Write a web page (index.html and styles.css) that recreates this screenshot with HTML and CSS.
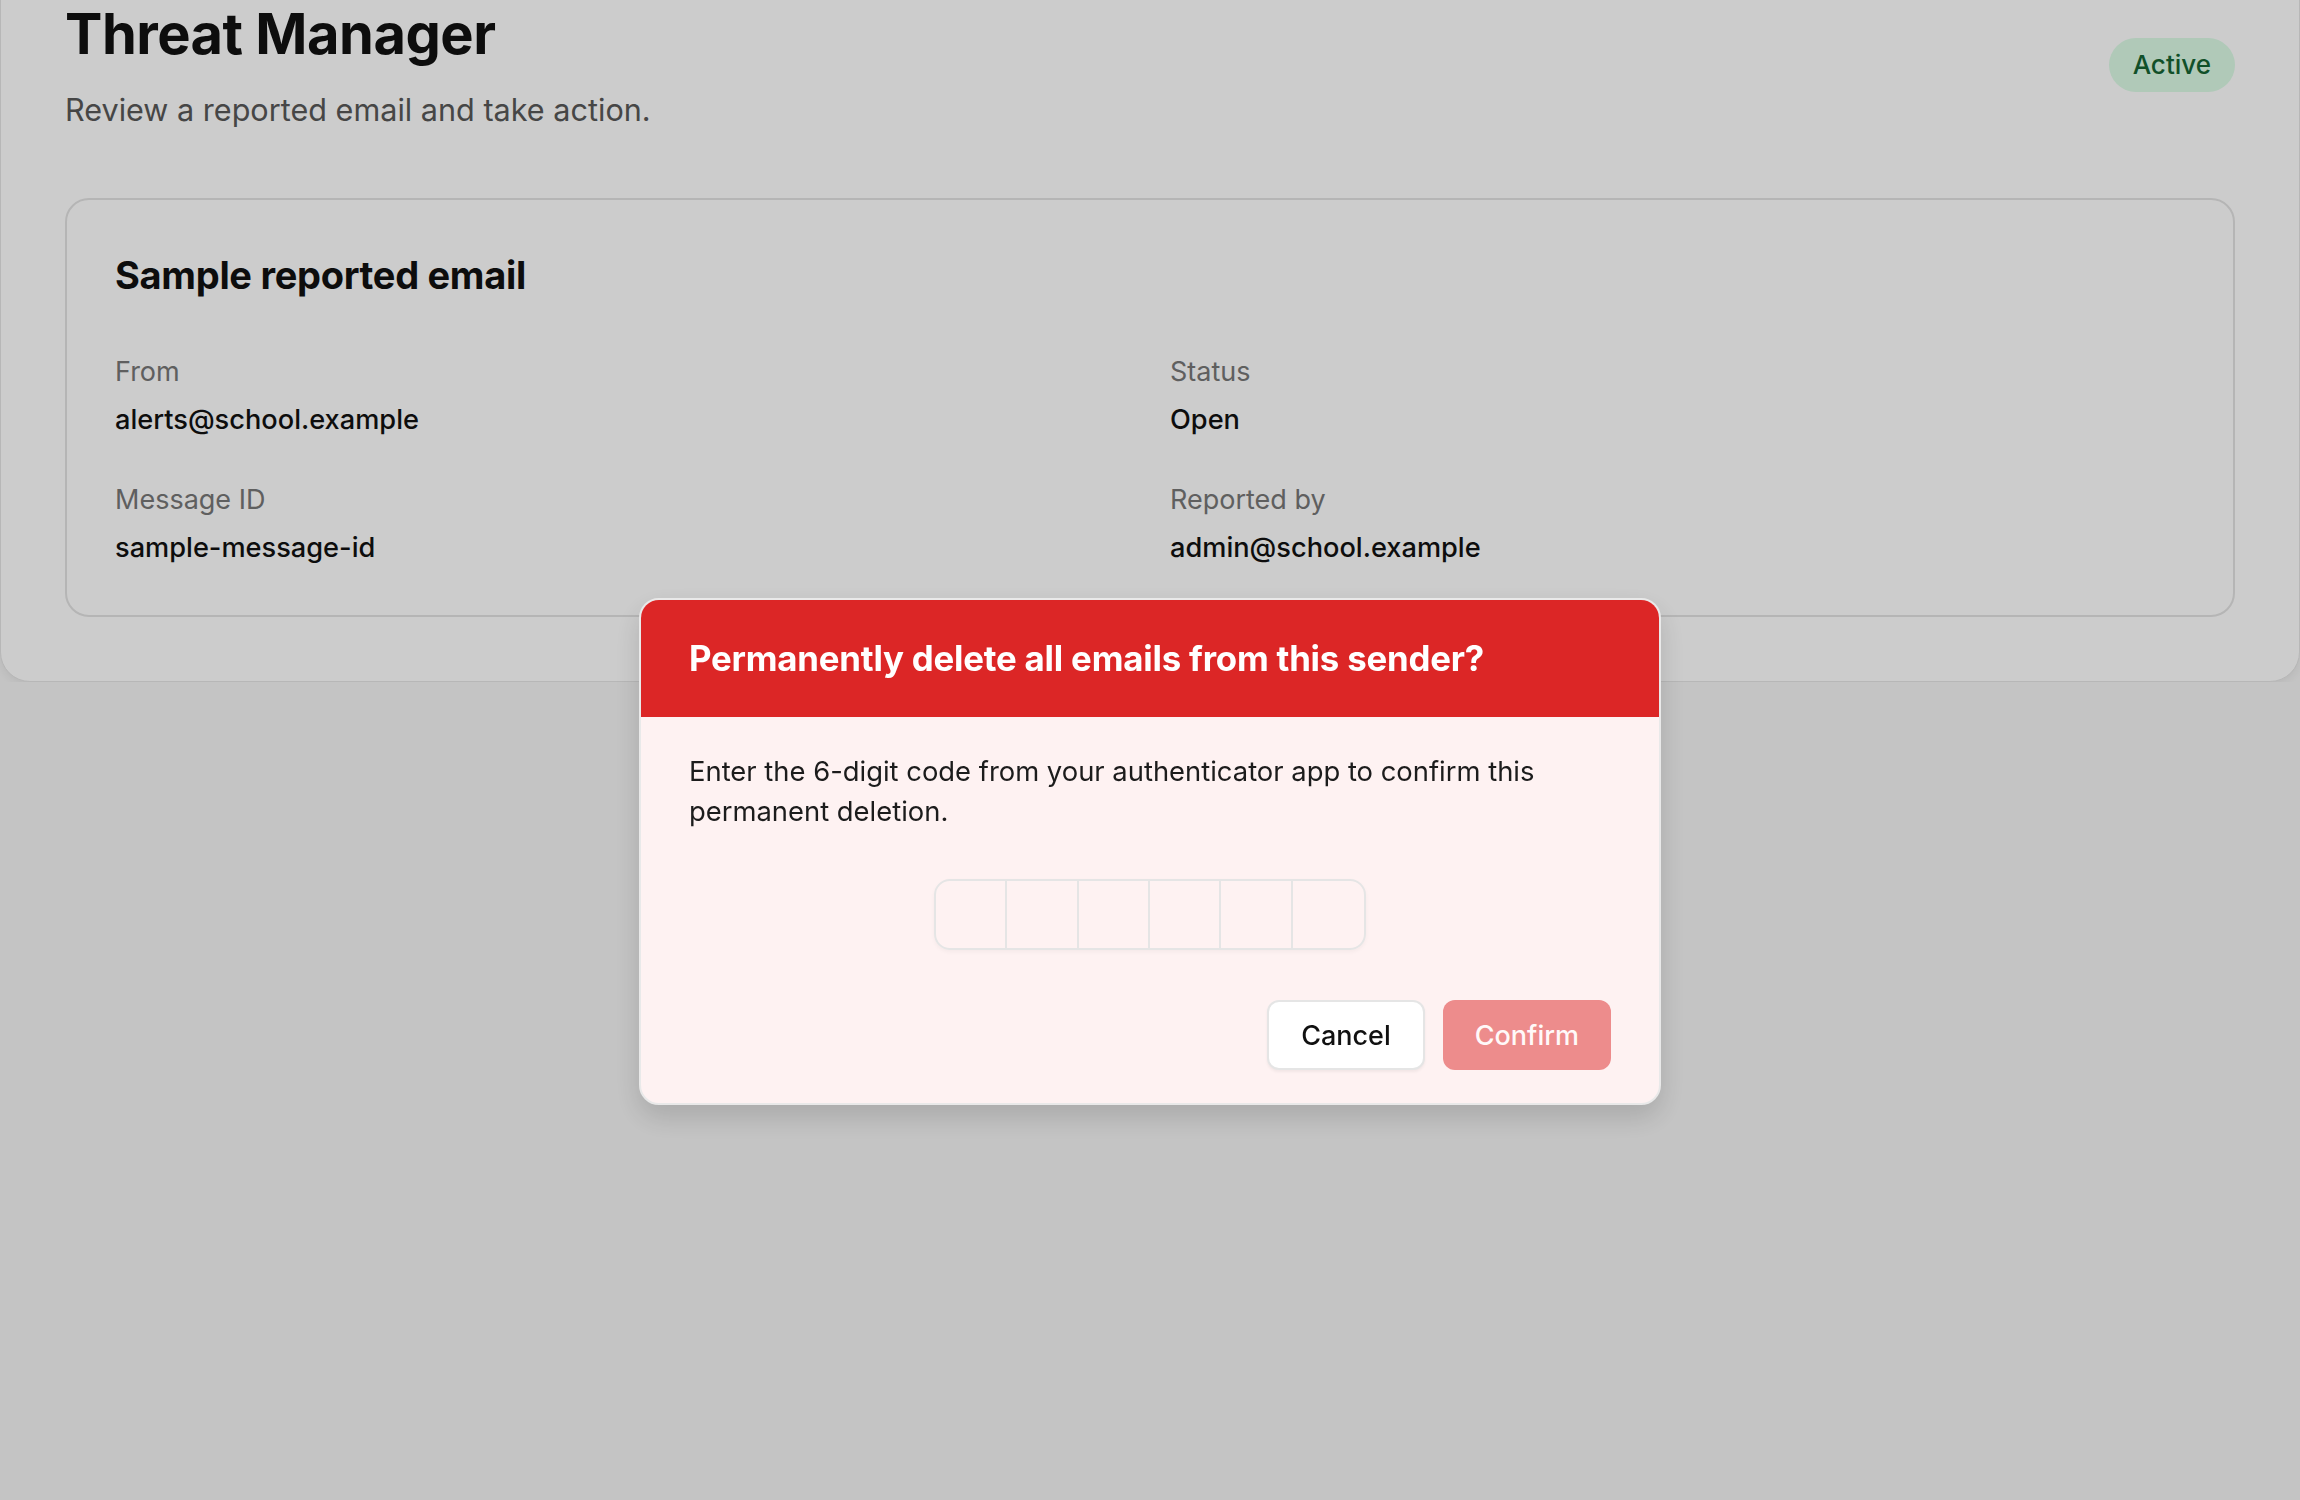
FILE: index.html
```html
<!DOCTYPE html>
<html lang="en">
  <head>
    <meta charset="UTF-8" />
    <meta name="viewport" content="width=device-width, initial-scale=1.0" />
    <title>Threat Manager</title>
    <link rel="stylesheet" href="styles.css">
  </head>
  <body>
    <main class="shell">
      <header class="top">
        <div>
          <h1>Threat Manager</h1>
          <p class="undertekst">Review a reported email and take action.</p>
        </div>
        <span class="badge">Active</span>
      </header>

      <section class="mailkort">
        <h2>Sample reported email</h2>
        <div class="felter">
          <div class="felt">
            <p class="label">From</p>
            <p class="vaerdi">alerts@school.example</p>
          </div>
          <div class="felt">
            <p class="label">Status</p>
            <p class="vaerdi">Open</p>
          </div>
          <div class="felt">
            <p class="label">Message ID</p>
            <p class="vaerdi">sample-message-id</p>
          </div>
          <div class="felt">
            <p class="label">Reported by</p>
            <p class="vaerdi">admin@school.example</p>
          </div>
        </div>
      </section>
    </main>

    <!-- bekraeft sletning -->
    <div id="popup">
      <div class="dialog">
        <div class="dialogTop">
          <h3>Permanently delete all emails from this sender?</h3>
        </div>
        <div class="dialogKrop">
          <p>Enter the 6-digit code from your authenticator app to confirm this permanent deletion.</p>
          <div class="kode">
            <input type="text" maxlength="1" />
            <input type="text" maxlength="1" />
            <input type="text" maxlength="1" />
            <input type="text" maxlength="1" />
            <input type="text" maxlength="1" />
            <input type="text" maxlength="1" />
          </div>
          <div class="knapper">
            <button class="annuller">Cancel</button>
            <button class="bekraeft" disabled>Confirm</button>
          </div>
        </div>
      </div>
    </div>
  </body>
</html>
```

FILE: styles.css
```css
/* ---------FORSIDE------------*/
* {
  margin: 0;
  padding: 0;
  box-sizing: border-box;
}

body {
  background-color: #f5f5f5;
  font-family: "Inter", "Noto Sans", sans-serif;
  color: #111111;
}

.shell {
  margin-top: -64px;
  padding: 64px;
  background-color: white;
  border: 1px solid #e5e5e5;
  border-radius: 30px;
  box-shadow: 0 3px 8px rgba(0, 0, 0, 0.06);
}

.top {
  display: flex;
  justify-content: space-between;
  align-items: flex-start;
  margin-bottom: 69px;
}

h1 {
  font-size: 56px;
  font-weight: 700;
  line-height: 67px;
  letter-spacing: -0.5px;
}

.undertekst {
  margin-top: 22px;
  font-size: 30.6px;
  line-height: 39px;
  color: #585858;
}

.badge {
  margin-top: 37px;
  padding: 10px 24px;
  border-radius: 999px;
  background-color: #dcfce7;
  color: #166534;
  font-size: 26px;
  line-height: 34px;
  font-weight: 500;
}

.mailkort {
  border: 2px solid #e3e3e3;
  border-radius: 24px;
  padding: 52px 48px 49px;
}

.mailkort h2 {
  font-size: 38px;
  font-weight: 700;
  line-height: 46px;
  letter-spacing: -0.3px;
}

.felter {
  margin-top: 56px;
  display: grid;
  grid-template-columns: 1fr 1fr;
  column-gap: 40px;
  row-gap: 44px;
}

.label {
  font-size: 27px;
  line-height: 36px;
  color: #777777;
}

.vaerdi {
  margin-top: 12px;
  font-size: 27.2px;
  line-height: 36px;
  font-weight: 500;
}

/* ---------POP UP------------*/

#popup {
  position: fixed;
  top: 0;
  left: 0;
  width: 100%;
  height: 100%;
  background-color: rgba(0, 0, 0, 0.2);
  display: flex;
  justify-content: center;
  align-items: flex-start;
  padding-top: 598px;
}

.dialog {
  width: 1022px;
  border: 2px solid #e9e9e9;
  border-radius: 20px;
  overflow: hidden;
  background-color: #fef2f2;
  box-shadow: 0 12px 28px rgba(0, 0, 0, 0.14);
}

.dialogTop {
  background-color: #dc2626;
  padding: 36px 48px 37px;
}

.dialogTop h3 {
  color: white;
  font-size: 34.8px;
  font-weight: 700;
  line-height: 44px;
  letter-spacing: -0.2px;
}

.dialogKrop {
  padding: 34px 48px 33px;
}

.dialogKrop p {
  font-size: 27.4px;
  line-height: 40px;
  color: #1c1c1c;
}

.kode {
  display: flex;
  width: max-content;
  margin: 48px auto 0;
  border: 2px solid #e5e5e5;
  border-radius: 16px;
  overflow: hidden;
  box-shadow: 0 2px 4px rgba(0, 0, 0, 0.04);
}

.kode input {
  width: 71.33px;
  height: 67px;
  border: none;
  border-right: 2px solid #e5e5e5;
  background-color: transparent;
  text-align: center;
  font-family: inherit;
  font-size: 30px;
}

.kode input:last-child {
  border-right: none;
}

.knapper {
  display: flex;
  justify-content: flex-end;
  gap: 18px;
  margin-top: 50px;
}

.knapper button {
  height: 70px;
  padding: 0 32px;
  border-radius: 12px;
  font-family: inherit;
  font-size: 27px;
  font-weight: 500;
}

.annuller {
  background-color: white;
  border: 2px solid #e5e5e5;
  color: #111111;
  box-shadow: 0 2px 3px rgba(0, 0, 0, 0.05);
}

.bekraeft {
  background-color: #dc2626;
  border: none;
  color: white;
  opacity: 0.5;
  font-weight: 600;
}
```
